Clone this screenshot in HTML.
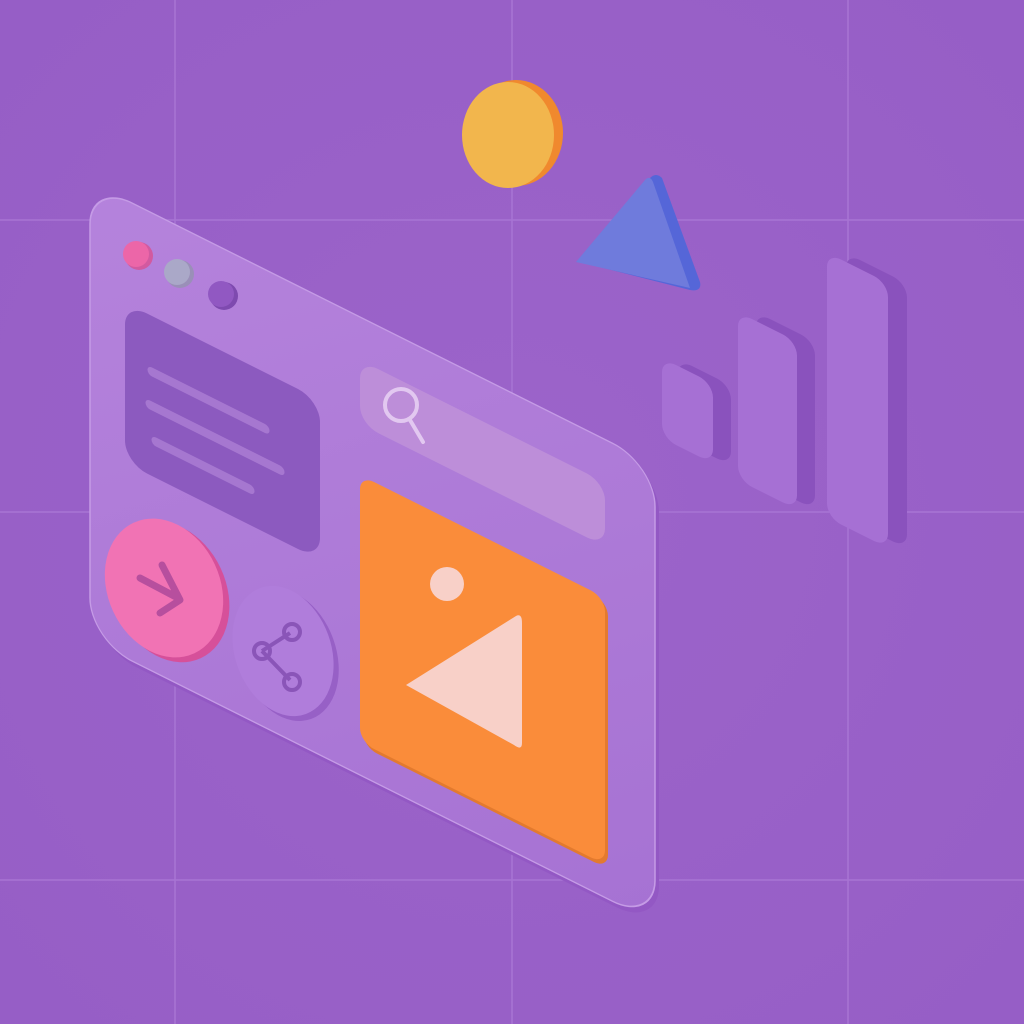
<!DOCTYPE html>
<html><head><style>html,body{margin:0;padding:0;background:#9a62c8;}svg{display:block}</style></head>
<body>
<svg width="1024" height="1024" viewBox="0 0 1024 1024" xmlns="http://www.w3.org/2000/svg">
<defs>
<radialGradient id="bg" cx="0.5" cy="0.5" r="0.7"><stop offset="0" stop-color="#9c64ca"/><stop offset="1" stop-color="#965ec6"/></radialGradient>
<linearGradient id="pn" x1="0" y1="0" x2="1" y2="1"><stop offset="0" stop-color="#b583dc"/><stop offset="1" stop-color="#a672d3"/></linearGradient>
</defs>
<rect width="1024" height="1024" fill="url(#bg)"/>
<g stroke="#a875d4" stroke-width="1.5">
<line x1="175" y1="0" x2="175" y2="1024"/><line x1="512" y1="0" x2="512" y2="1024"/><line x1="848" y1="0" x2="848" y2="1024"/>
<line x1="0" y1="220" x2="1024" y2="220"/><line x1="0" y1="512" x2="1024" y2="512"/><line x1="0" y1="880" x2="1024" y2="880"/>
</g>

<ellipse cx="516" cy="133" rx="47" ry="53" fill="#f0892e"/>
<ellipse cx="508" cy="135" rx="46" ry="53" fill="#f2b64d"/>
<path d="M580 262 L650 178 Q656 172 662 178 L700 282 Q702 292 690 290 Z" fill="#5566d8"/>
<path d="M576 262 L645 180 Q650 175 653 182 L690 288 Z" fill="#6f7bdc"/>

<g transform="matrix(1,0.5,0,1,0,0)">
<rect x="678" y="20" width="53" height="80" rx="14" fill="#8a52bd"/>
<rect x="662" y="27" width="51" height="80" rx="14" fill="#a670d4"/>
<rect x="756" y="-66" width="59" height="168" rx="14" fill="#8a52bd"/>
<rect x="738" y="-57" width="59" height="168" rx="14" fill="#a670d4"/>
<rect x="846" y="-170" width="61" height="265" rx="14" fill="#8a52bd"/>
<rect x="827" y="-161" width="61" height="265" rx="14" fill="#a670d4"/>
</g>

<g transform="matrix(1,0.5,0,1,90,182)">
<rect x="4" y="4" width="565" height="458" rx="42" fill="#9358c4"/>
<rect x="0" y="0" width="565" height="458" rx="42" fill="url(#pn)" stroke="#c59be6" stroke-width="1.5"/>
<rect x="35" y="103" width="195" height="160" rx="22" fill="#8c5abf"/>
<g stroke="#a677d0" stroke-width="9" stroke-linecap="round">
<line x1="62" y1="159" x2="175" y2="159"/><line x1="60" y1="193" x2="190" y2="193"/><line x1="66" y1="227" x2="160" y2="227"/>
</g>
<rect x="270" y="43" width="245" height="64" rx="18" fill="#bd8ed9"/>
<rect x="273" y="161" width="245" height="267" rx="14" fill="#e37a2e"/>
<rect x="270" y="158" width="245" height="267" rx="14" fill="#fa8c3a"/>
<path d="M316 345 L426 221 Q432 215 432 225 L432 345 Q432 353 424 351 Z" fill="#f8d0c8"/>
</g>
<circle cx="139" cy="256" r="14" fill="#d25aa0"/>
<circle cx="136" cy="254" r="13" fill="#ec66a8"/>
<circle cx="180" cy="274" r="14" fill="#9a8fb8"/>
<circle cx="177" cy="272" r="13" fill="#aaa8c8"/>
<circle cx="224" cy="296" r="14" fill="#7e4aaf"/>
<circle cx="221" cy="294" r="13" fill="#9158c2"/>
<circle cx="447" cy="584" r="17" fill="#f8d0c8"/>
<circle cx="401" cy="405" r="16" fill="none" stroke="#e2c8f0" stroke-width="4"/>
<line x1="410" y1="420" x2="423" y2="442" stroke="#e2c8f0" stroke-width="4" stroke-linecap="round"/>

<ellipse cx="170" cy="592" rx="56" ry="73" transform="rotate(-25 170 592)" fill="#d6509a"/>
<ellipse cx="164" cy="588" rx="56" ry="72" transform="rotate(-25 164 588)" fill="#f173b4"/>
<path d="M140 578 L176 597 M162 565 L180 600 L160 613" stroke="#b74f9e" stroke-width="7" fill="none" stroke-linecap="round" stroke-linejoin="round"/>
<ellipse cx="288" cy="655" rx="48" ry="68" transform="rotate(-20 288 655)" fill="#9760c6"/>
<ellipse cx="283" cy="651" rx="48" ry="67" transform="rotate(-20 283 651)" fill="#b07ddb"/>
<g stroke="#8a55b8" stroke-width="4" fill="none">
<line x1="262" y1="651" x2="290" y2="633"/><line x1="262" y1="651" x2="290" y2="680"/>
<circle cx="262" cy="651" r="8"/><circle cx="292" cy="632" r="8"/><circle cx="292" cy="682" r="8"/>
</g>
</svg>
</body></html>
